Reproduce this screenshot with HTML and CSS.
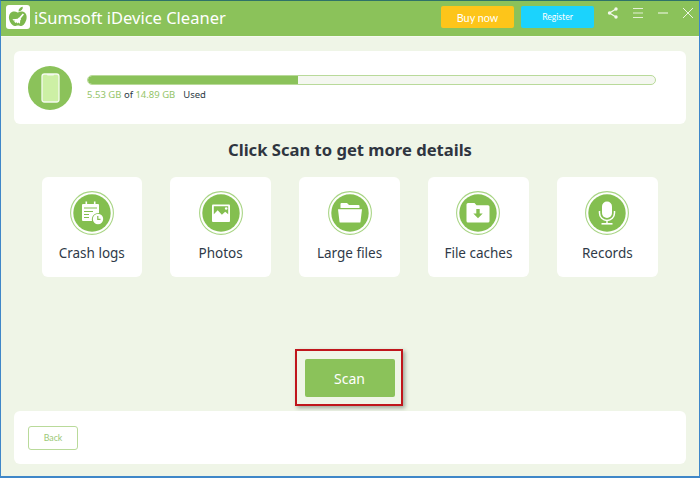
FILE: index.html
```html
<!DOCTYPE html>
<html lang="en">
<head>
<meta charset="utf-8">
<title>iSumsoft iDevice Cleaner</title>
<link rel="stylesheet" href="styles.css">
</head>
<body>
<div class="window">
  <header class="titlebar">
    <div class="logo">
      <svg viewBox="0 0 24 24" width="24" height="24"><path fill="#7db84e" d="M12 7.500c2-1.300 5-1.600 7 .3 1.800 1.700 2 4.600 1.300 7-.8 2.700-2.600 6.200-5 6.200-1.300 0-2-.6-3.300-.6s-2 .6-3.300.6c-2.500 0-4.800-3.600-5.500-6.400-.6-2.400-.3-5.100 1.500-6.800 2-1.800 5.100-1.500 6.800-.3z"/><path fill="#7db84e" d="M12.500 6.500c0-2.500 1.500-4.300 4.300-4.800.2 2.800-1.500 4.500-4.300 4.800z"/><path fill="#fff" d="M16.800 8.600l1.200 1-3.300 3.800-1.300-1.100zM13.200 12.200l2 1.700-1 1.600-.2 3.200-1.600-1.300-.6 1-1.400-1.200-.8.700-1.500-1.300 1-.9-1.700-.3-1-1.100 3-.3 2.200-.3z"/></svg>
    </div>
    <h1 class="app-name">iSumsoft iDevice Cleaner</h1>
    <button class="head-btn buy">Buy now</button>
    <button class="head-btn register">Register</button>
    <div class="win-controls">
      <svg viewBox="0 0 12 12" width="12" height="12"><path fill="none" stroke="#f3f8ec" stroke-width="1.300" d="M9 2 2.500 6 9 10"/><circle cx="9" cy="2" r="1.700" fill="#f3f8ec"/><circle cx="2.500" cy="6" r="1.700" fill="#f3f8ec"/><circle cx="9" cy="10" r="1.700" fill="#f3f8ec"/></svg>
      <svg viewBox="0 0 12 12" width="12" height="12"><path stroke="#e4f0d6" stroke-width="1" d="M1 1.500h10M1 6h10M1 10.500h10"/></svg>
      <svg viewBox="0 0 12 12" width="12" height="12"><path stroke="#e4f0d6" stroke-width="1.200" d="M1 6h10"/></svg>
      <svg viewBox="0 0 12 12" width="12" height="12"><path stroke="#eef5e4" stroke-width="1" d="M1 1l10 10M11 1 1 11"/></svg>
    </div>
  </header>
  <div class="divider"></div>
  <main class="content">
    <section class="card storage">
      <div class="phone-badge">
        <svg viewBox="0 0 44 44" width="44" height="44"><circle cx="22" cy="22" r="22" fill="#8bc25a"/><rect x="14" y="8" width="17" height="28" rx="2.500" fill="#cdf0a5" stroke="#f5faef" stroke-width="1.300"/><path fill="#f5faef" d="M18.500 8h8l-1 1.500h-6z"/></svg>
      </div>
      <div class="usage">
        <div class="bar"><div class="bar-fill"></div></div>
        <p class="usage-text"><span class="accent">5.53 GB</span> of <span class="accent">14.89 GB</span><span class="used">Used</span></p>
      </div>
    </section>
    <h2 class="heading">Click Scan to get more details</h2>
    <section class="tiles">
      <div class="tile">
        <svg viewBox="0 0 44 44" width="44" height="44"><circle cx="22" cy="22" r="21.400" fill="none" stroke="#a9d585" stroke-width="1.100"/><circle cx="22" cy="22" r="18.700" fill="#84bf50"/><path fill="#fff" d="M13 13h2.500v-2.500h1.600V13h6.800v-2.500h1.600V13H28a1 1 0 0 1 1 1v8a6.500 6.500 0 0 0-7 8H13a1 1 0 0 1-1-1V14a1 1 0 0 1 1-1z"/><path stroke="#84bf50" stroke-width="1.200" d="M14 17h13M14 20.500h9M14 23.500h5M14 26.500h5"/><circle cx="28" cy="28" r="5.200" fill="#fff"/><path fill="none" stroke="#84bf50" stroke-width="1.200" d="M27.800 25v3.300h2.700"/></svg>
        <span class="tile-label">Crash logs</span>
      </div>
      <div class="tile">
        <svg viewBox="0 0 44 44" width="44" height="44"><circle cx="22" cy="22" r="21.400" fill="none" stroke="#a9d585" stroke-width="1.100"/><circle cx="22" cy="22" r="18.700" fill="#84bf50"/><rect x="13" y="13.500" width="18" height="17.500" rx="1" fill="#fff"/><path fill="#84bf50" d="M14.800 15.300h14.400v8l-3-2.500-3.300 3-4.200-4.500-3.900 4z"/><circle cx="27.200" cy="17.500" r="1.300" fill="#fff"/></svg>
        <span class="tile-label">Photos</span>
      </div>
      <div class="tile">
        <svg viewBox="0 0 44 44" width="44" height="44"><circle cx="22" cy="22" r="21.400" fill="none" stroke="#a9d585" stroke-width="1.100"/><circle cx="22" cy="22" r="18.700" fill="#84bf50"/><path fill="#fff" d="M12.500 13a1 1 0 0 1 1-1h5.500l2 2h9.500a1 1 0 0 1 1 1v2h-19z"/><path fill="#fff" d="M10 18.200h24l-1.500 12.500a1 1 0 0 1-1 .9h-19a1 1 0 0 1-1-.9z"/></svg>
        <span class="tile-label">Large files</span>
      </div>
      <div class="tile">
        <svg viewBox="0 0 44 44" width="44" height="44"><circle cx="22" cy="22" r="21.400" fill="none" stroke="#a9d585" stroke-width="1.100"/><circle cx="22" cy="22" r="18.700" fill="#84bf50"/><path fill="#fff" d="M10.500 13.500a1.500 1.500 0 0 1 1.500-1.500h6.500l2 2.300H32a1.500 1.500 0 0 1 1.500 1.500V30a1.500 1.500 0 0 1-1.500 1.500H12a1.500 1.500 0 0 1-1.500-1.500z"/><path fill="#84bf50" d="M20.300 18h3.400v4.500h3L22 27.300l-4.700-4.800h3z"/></svg>
        <span class="tile-label">File caches</span>
      </div>
      <div class="tile">
        <svg viewBox="0 0 44 44" width="44" height="44"><circle cx="22" cy="22" r="21.400" fill="none" stroke="#a9d585" stroke-width="1.100"/><circle cx="22" cy="22" r="18.700" fill="#84bf50"/><rect x="17" y="10.500" width="10" height="16.500" rx="5" fill="#fff"/><path fill="none" stroke="#fff" stroke-width="1.500" d="M14.500 20v2a7.500 7.500 0 0 0 15 0v-2M22 29.500v3"/><path stroke="#fff" stroke-width="1.600" d="M16.500 32.800h11"/></svg>
        <span class="tile-label">Records</span>
      </div>
    </section>
    <div class="scan-row">
      <div class="scan-mark"><button class="scan">Scan</button></div>
    </div>
    <footer class="card footer">
      <button class="back">Back</button>
    </footer>
  </main>
</div>
</body>
</html>
```
FILE: styles.css
```css
* { box-sizing: border-box; }
html, body { margin: 0; padding: 0; }
body { width: 700px; height: 478px; overflow: hidden; font-family: "Noto Sans", "Open Sans", "Liberation Sans", sans-serif; }
button { font-family: inherit; border: 0; padding: 0; }

.window {
  width: 700px; height: 478px;
  display: flex; flex-direction: column;
  background: #eff5e7;
  border-top: 1px solid #2f7268;
  border-left: 1px solid #3f87c8;
  border-right: 1px solid #3f87c8;
  border-bottom: 2px solid #3f87c8;
}

.titlebar {
  height: 35px; flex: none;
  display: flex; align-items: center;
  padding: 0 0 3px 5px;
  background: #8bc25a;
}
.divider { height: 1px; flex: none; background: #f6faf1; }
.logo {
  width: 24px; height: 24px; flex: none;
  background: #fff; border-radius: 3px;
}
.logo svg { display: block; }
.app-name {
  margin: 0 0 0 4px; width: 407px;
  font-size: 16.500px; font-weight: 400; color: #fff; white-space: nowrap;
}
.head-btn { height: 22px; color: #fff; border-radius: 2px; font-family: "Lato", sans-serif; }
.buy { width: 73px; background: #fdc51a; font-size: 10.800px; }
.register { width: 73px; margin-left: 7px; background: #1bd3fd; font-size: 8.600px; }
.win-controls {
  display: flex; gap: 13px; margin: 0 0 9px 13px;
}
.win-controls svg { display: block; }

.content { flex: 1; display: flex; flex-direction: column; padding: 14px 13px 12px; }

.card { background: #fff; border-radius: 6px; }
.storage { height: 73px; flex: none; display: flex; align-items: center; padding-left: 14px; }
.phone-badge { width: 44px; height: 44px; flex: none; }
.phone-badge svg { display: block; }
.usage { margin-left: 15px; width: 569px; margin-top: 1px; }
.bar {
  height: 10px; border-radius: 5px;
  background: #f4f7f0; border: 1px solid #b9da9a;
  overflow: hidden;
}
.bar-fill { width: 210px; height: 100%; background: #8bc25a; border-radius: 5px 0 0 5px; }
.usage-text { margin: 3px 0 0; font-size: 9.500px; line-height: 14px; color: #2c3a45; }
.accent { color: #93c468; }
.used { margin-left: 8px; }

.heading {
  margin: 14px 0 0; text-align: center;
  font-size: 16.600px; line-height: 24px; font-weight: 700; color: #2f3540;
}

.tiles { display: flex; justify-content: space-between; margin: 15px 28.400px 0 27.500px; }
.tile {
  width: 100.500px; height: 100px;
  background: #fff; border-radius: 6px;
  display: flex; flex-direction: column; align-items: center;
  padding-top: 14px;
}
.tile svg { display: block; }
.tile-label { margin-top: 8px; font-size: 13.500px; line-height: 20px; color: #2f3a48; white-space: nowrap; }

.scan-row { flex: 1; display: flex; justify-content: center; align-items: flex-end; padding-bottom: 5px; }
.scan-mark {
  width: 108px; height: 57px;
  padding: 8px 6px 7px 8px;
  border: 2px solid #c0161c;
  box-shadow: 2px 2px 4px rgba(40, 50, 40, .4);
  margin-left: -3px;
}
.scan {
  display: block; width: 90px; height: 38px;
  background: #8bc25a; color: #fff; border-radius: 2px;
  font-size: 14px;
}

.footer { height: 53px; flex: none; display: flex; align-items: center; padding-left: 14px; }
.back {
  width: 50px; height: 24px;
  background: #fff; border: 1px solid #b9da9a; border-radius: 3px;
  color: #9cc877; font-size: 8.800px; font-family: "Lato", sans-serif;
}
```
